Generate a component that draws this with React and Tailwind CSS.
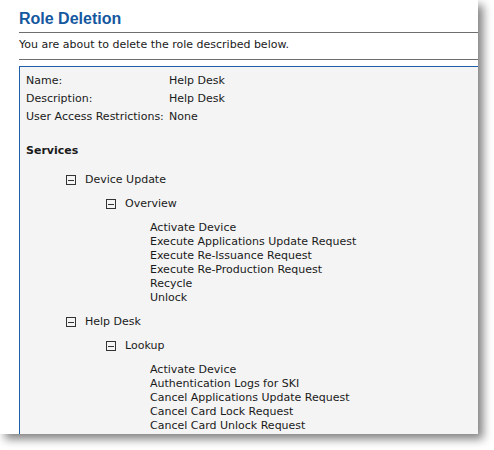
import React from "react";

const FONT = { fontFamily: '"DejaVu Sans", Verdana, Tahoma, sans-serif' };

const details = [
  ["Name:", "Help Desk"],
  ["Description:", "Help Desk"],
  ["User Access Restrictions:", "None"],
];

const services = [
  {
    name: "Device Update",
    groups: [
      {
        name: "Overview",
        items: [
          "Activate Device",
          "Execute Applications Update Request",
          "Execute Re-Issuance Request",
          "Execute Re-Production Request",
          "Recycle",
          "Unlock",
        ],
      },
    ],
  },
  {
    name: "Help Desk",
    groups: [
      {
        name: "Lookup",
        items: [
          "Activate Device",
          "Authentication Logs for SKI",
          "Cancel Applications Update Request",
          "Cancel Card Lock Request",
          "Cancel Card Unlock Request",
        ],
      },
    ],
  },
];

// little boxed minus used by the tree
const Collapse = () => (
  <span className="w-[10px] h-[10px] border border-[#333] flex items-center justify-center shrink-0 mt-[2px]">
    <span className="w-[6px] h-px bg-[#333]" />
  </span>
);

const TreeHead = ({ label }) => (
  <div className="flex items-start gap-[9px] h-[14px] mb-[10px]">
    <Collapse />
    <span>{label}</span>
  </div>
);

export default function App() {
  return (
    <div className="w-[494px] h-[450px] bg-white">
      <div
        className="w-[478px] h-[434px] bg-white overflow-hidden shadow-[5px_5px_9px_rgba(0,0,0,0.5)] pl-[19px] text-[11px] text-[#1a1a1a]"
        style={FONT}
      >
        {/* Title */}
        <div className="pt-[9px] pb-[3px] border-b border-[#6e6e6e]">
          <h1
            className="text-[16px] leading-[20px] font-bold text-[#1558a0]"
            style={{ fontFamily: '"Liberation Sans", Arial, sans-serif' }}
          >
            Role Deletion
          </h1>
        </div>

        <div className="pt-[5px] pb-[7px] leading-[14px] border-b border-[#6e6e6e]">
          You are about to delete the role described below.
        </div>

        {/* Details box */}
        <div className="mt-[6px] border-t border-l border-[#1f5ea8] bg-[#f4f4f4] pl-[6px] pt-[5px] h-[600px]">
          {details.map(([k, v]) => (
            <div key={k} className="flex leading-[18px]">
              <span className="w-[143px] shrink-0">{k}</span>
              <span>{v}</span>
            </div>
          ))}

          <div className="mt-[18px] font-bold leading-[14px]">Services</div>

          <div className="mt-[15px] pl-[40px] leading-[14px]">
            {services.map((svc, i) => (
              <div key={svc.name} className={i > 0 ? "mt-[10px]" : ""}>
                <TreeHead label={svc.name} />
                <div className="pl-[40px]">
                  {svc.groups.map((g) => (
                    <div key={g.name}>
                      <TreeHead label={g.name} />
                      <div className="pl-[44px]">
                        {g.items.map((it) => (
                          <div key={it} className="leading-[14px]">
                            {it}
                          </div>
                        ))}
                      </div>
                    </div>
                  ))}
                </div>
              </div>
            ))}
          </div>
        </div>
      </div>
    </div>
  );
}
